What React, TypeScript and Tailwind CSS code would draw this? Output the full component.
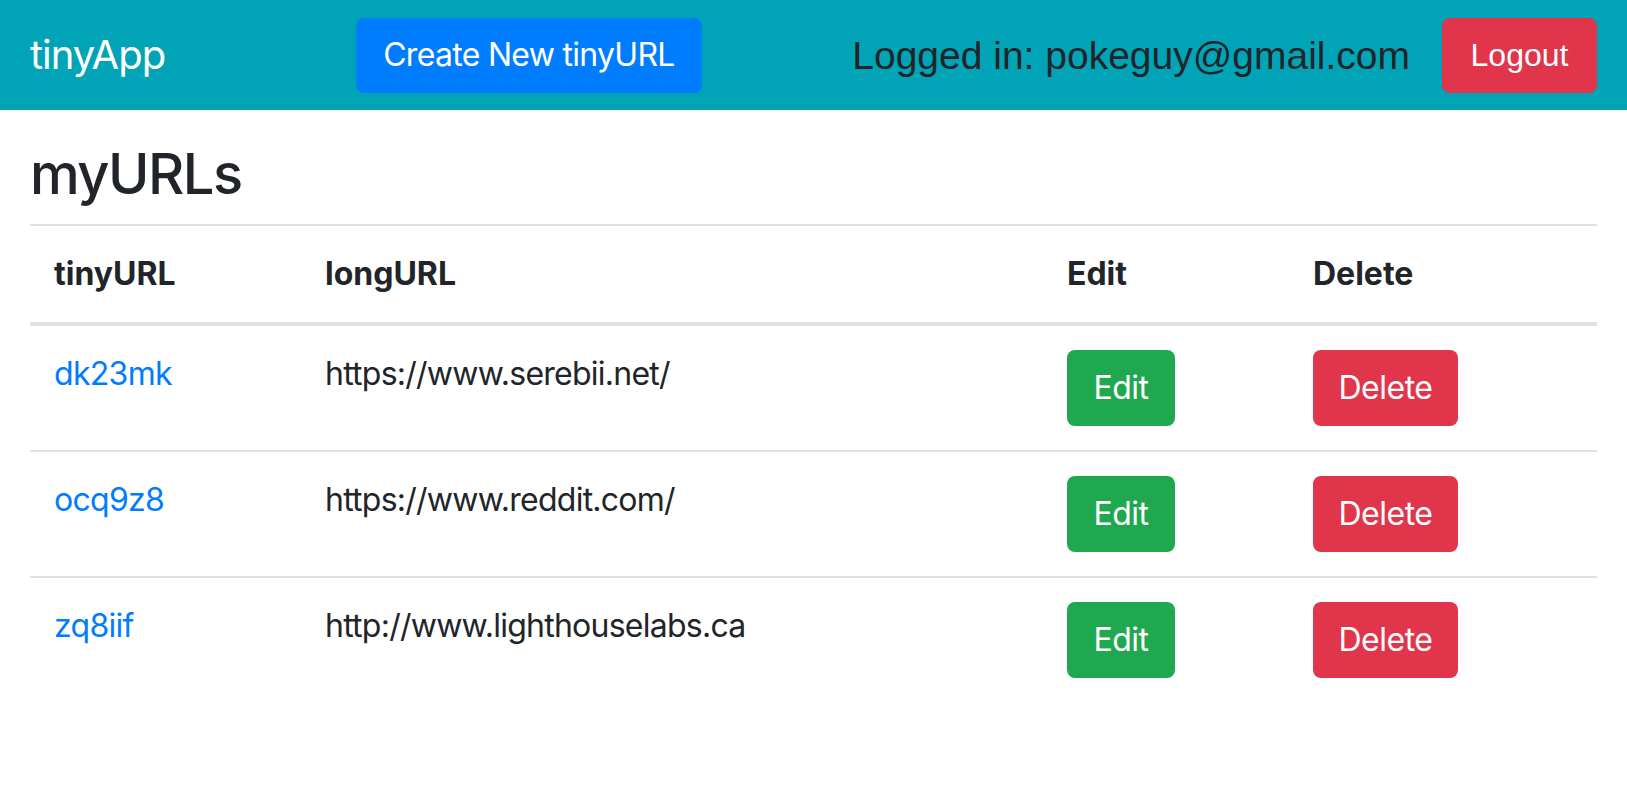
import React from "react";

const rows = [
  { id: "dk23mk", url: "https://www.serebii.net/" },
  { id: "ocq9z8", url: "https://www.reddit.com/" },
  { id: "zq8iif", url: "http://www.lighthouselabs.ca" },
];

export default function App() {
  return (
    <div className="min-h-screen bg-white text-[#212529] font-['Inter',sans-serif]">
      <nav className="h-[110px] bg-[#01a4b6] flex items-center px-[30px]">
        <span className="text-white text-[40px] leading-none tracking-[-1px]">tinyApp</span>
        <button className="ml-[191px] h-[75px] px-[27px] rounded-[8px] bg-[#007cff] text-white text-[32px] leading-none tracking-[-0.7px]">
          Create New tinyURL
        </button>
        <span className="ml-auto text-[39px] leading-none font-['Liberation_Sans',Arial,sans-serif] text-[#212529]">
          Logged in: pokeguy@gmail.com
        </span>
        <button className="ml-[32px] h-[75px] w-[155px] rounded-[8px] bg-[#e0354a] text-white text-[32px] leading-none font-['Liberation_Sans',Arial,sans-serif]">
          Logout
        </button>
      </nav>
      <main className="px-[30px] pt-[31px]">
        <h3 className="text-[56px] font-medium leading-[1.2] mb-[16px] tracking-[-1.5px]">myURLs</h3>
        <table className="w-full table-fixed border-collapse text-[32px] leading-[48px]">
          <colgroup>
            <col className="w-[271px]" />
            <col className="w-[742px]" />
            <col className="w-[246px]" />
            <col />
          </colgroup>
          <thead>
            <tr>
              <th className="text-left font-bold p-[24px] border-t-2 border-b-4 border-[#dee2e6] align-bottom">tinyURL</th>
              <th className="text-left font-bold p-[24px] border-t-2 border-b-4 border-[#dee2e6] align-bottom">longURL</th>
              <th className="text-left font-bold p-[24px] border-t-2 border-b-4 border-[#dee2e6] align-bottom">Edit</th>
              <th className="text-left font-bold p-[24px] border-t-2 border-b-4 border-[#dee2e6] align-bottom">Delete</th>
            </tr>
          </thead>
          <tbody>
            {rows.map((r) => (
              <tr key={r.id}>
                <td className="p-[24px] border-t-2 border-[#dee2e6] align-top tracking-[-0.7px]">
                  <a className="text-[#007cff]">{r.id}</a>
                </td>
                <td className="p-[24px] border-t-2 border-[#dee2e6] align-top tracking-[-0.75px]">{r.url}</td>
                <td className="p-[24px] border-t-2 border-[#dee2e6] align-top">
                  <button className="block h-[76px] w-[108px] rounded-[8px] bg-[#1fa84f] text-white text-[32px] leading-none tracking-[-0.5px]">Edit</button>
                </td>
                <td className="p-[24px] border-t-2 border-[#dee2e6] align-top">
                  <button className="block h-[76px] w-[145px] rounded-[8px] bg-[#e0354a] text-white text-[32px] leading-none tracking-[-0.5px]">Delete</button>
                </td>
              </tr>
            ))}
          </tbody>
        </table>
      </main>
    </div>
  );
}
